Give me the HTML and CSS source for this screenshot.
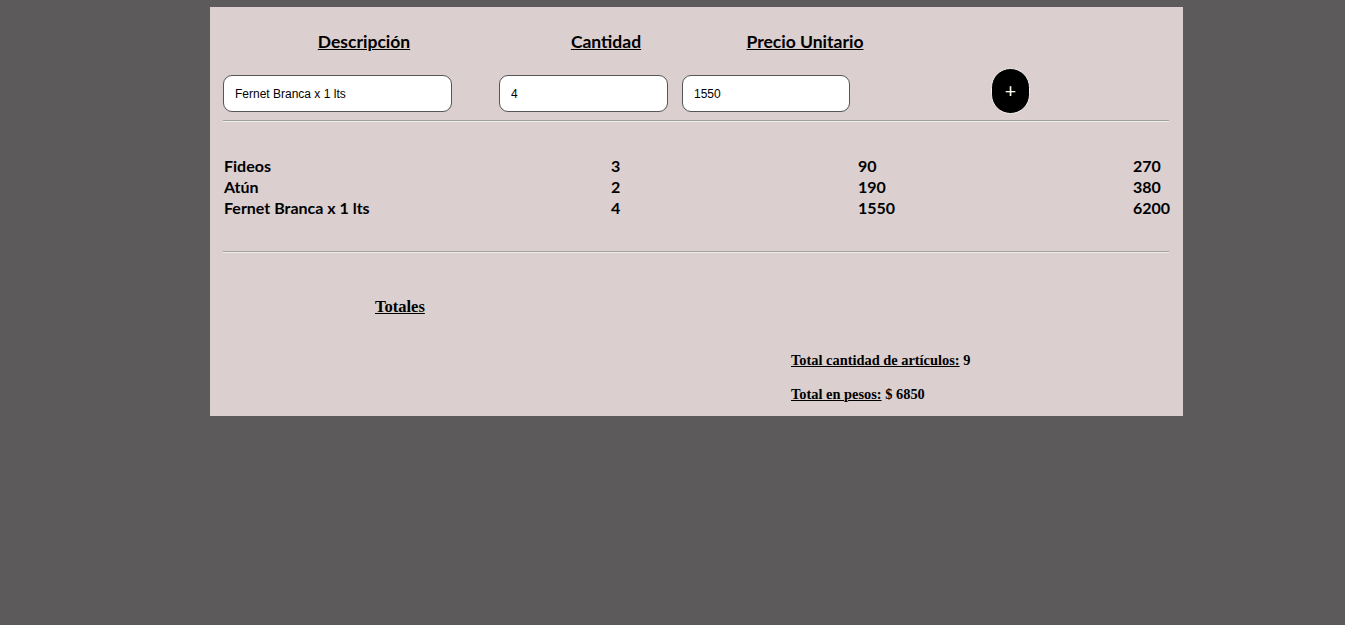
FILE: index.html
```html
<!DOCTYPE html>
<html lang="es">
<head>
<meta charset="utf-8">
<title>Compras</title>
<link rel="stylesheet" href="styles.css">
</head>
<body>
<div class="card">
  <div class="heads">
    <span class="head">Descripción</span>
    <span class="head">Cantidad</span>
    <span class="head">Precio Unitario</span>
  </div>
  <div class="form">
    <input class="field f-desc" type="text" value="Fernet Branca x 1 lts">
    <input class="field f-qty" type="text" value="4">
    <input class="field f-price" type="text" value="1550">
    <button class="add">+</button>
  </div>
  <hr class="rule">
  <div class="items">
    <span>Fideos</span><span>3</span><span>90</span><span>270</span>
    <span>Atún</span><span>2</span><span>190</span><span>380</span>
    <span>Fernet Branca x 1 lts</span><span>4</span><span>1550</span><span>6200</span>
  </div>
  <hr class="rule">
  <h3 class="totales"><u>Totales</u></h3>
  <div class="sums">
    <p class="sum"><u>Total cantidad de artículos:</u> 9</p>
    <p class="sum"><u>Total en pesos:</u> $ 6850</p>
  </div>
</div>
</body>
</html>
```

FILE: styles.css
```css
html, body {
  margin: 0;
  padding: 0;
  background: #5c5a5b;
}
body {
  padding-top: 7px;
}
.card {
  margin-left: 210px;
  width: 973px;
  height: 409px;
  background: #dbcfcf;
  box-sizing: border-box;
  padding: 24px 14px 0 13px;
  font-family: Lato, "Noto Sans", sans-serif;
  color: #000;
}
.heads {
  display: grid;
  grid-template-columns: 282px 202px 196px;
  height: 22px;
}
.head {
  text-align: center;
  font-weight: 700;
  font-size: 17.5px;
  line-height: 22px;
  text-decoration: underline;
}
.form {
  display: flex;
  align-items: flex-start;
  margin-top: 15px;
  height: 45px;
}
.field {
  box-sizing: border-box;
  height: 37px;
  margin-top: 7px;
  border: 1px solid #555;
  border-radius: 9px;
  background: #fff;
  font-family: "Liberation Sans", Arial, sans-serif;
  font-size: 12px;
  padding: 0 11px;
  color: #000;
  outline: none;
}
.f-desc { width: 229px; }
.f-qty { width: 169px; margin-left: 47px; }
.f-price { width: 168px; margin-left: 14px; }
.add {
  margin-left: 141px;
  width: 39px;
  height: 46px;
  border-radius: 20px;
  background: #000;
  color: #fff;
  border: 1px solid #f4f0f0;
  font-size: 20px;
  line-height: 1;
  padding: 0;
  font-family: "Noto Sans", sans-serif;
}
.rule {
  border: 0;
  border-top: 1px solid #a39e9e;
  border-bottom: 1px solid #eee;
  margin: 7px 0 0 0;
  height: 0;
}
.items {
  display: grid;
  grid-template-columns: 387px 247px 275px auto;
  margin: 33px 0 0 1px;
  font-weight: 700;
  font-size: 16px;
  line-height: 21px;
}
.items + .rule {
  margin-top: 33px;
}
.totales {
  margin: 44px 0 0 152px;
  font-family: "Liberation Serif", "Times New Roman", serif;
  font-size: 16.5px;
  line-height: 20px;
  font-weight: 700;
}
.sums {
  margin: 35px 0 0 568px;
}
.sum {
  margin: 0 0 17px 0;
  font-family: "Liberation Serif", "Times New Roman", serif;
  font-size: 14.4px;
  line-height: 17px;
  font-weight: 700;
}
```
